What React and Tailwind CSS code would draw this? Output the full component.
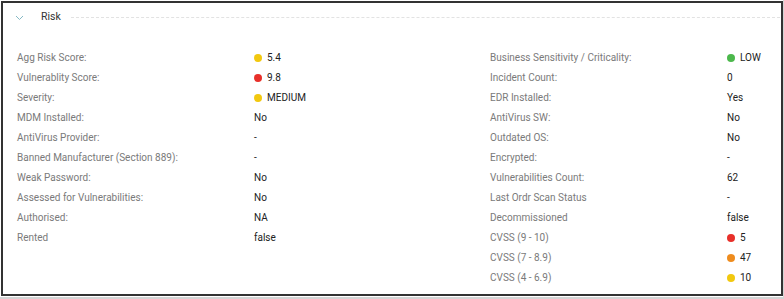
import React from "react";

const dotColors = {
  yellow: "bg-[#f2c80f]",
  red: "bg-[#e8302a]",
  green: "bg-[#4cb84c]",
  orange: "bg-[#ee8c1e]",
};

const left = [
  ["Agg Risk Score:", "5.4", "yellow"],
  ["Vulnerablity Score:", "9.8", "red"],
  ["Severity:", "MEDIUM", "yellow"],
  ["MDM Installed:", "No"],
  ["AntiVirus Provider:", "-"],
  ["Banned Manufacturer (Section 889):", "-"],
  ["Weak Password:", "No"],
  ["Assessed for Vulnerabilities:", "No"],
  ["Authorised:", "NA"],
  ["Rented", "false"],
];

const right = [
  ["Business Sensitivity / Criticality:", "LOW", "green"],
  ["Incident Count:", "0"],
  ["EDR Installed:", "Yes"],
  ["AntiVirus SW:", "No"],
  ["Outdated OS:", "No"],
  ["Encrypted:", "-"],
  ["Vulnerabilities Count:", "62"],
  ["Last Ordr Scan Status", "-"],
  ["Decommissioned", "false"],
  ["CVSS (9 - 10)", "5", "red"],
  ["CVSS (7 - 8.9)", "47", "orange"],
  ["CVSS (4 - 6.9)", "10", "yellow"],
];

function Row({ label, value, dot }) {
  return (
    <div className="flex items-center h-[20px]">
      <div className="w-[237px] text-[#7a7a7a] whitespace-nowrap">{label}</div>
      <div className="flex items-center gap-[5px] text-[#222]">
        {dot && <span className={`inline-block w-[8px] h-[8px] rounded-full ${dotColors[dot]}`} />}
        <span>{value}</span>
      </div>
    </div>
  );
}

export default function App() {
  return (
    <div className="w-[784px] h-[299px] bg-[#d4d4d4] relative overflow-hidden" style={{ fontFamily: "Roboto, 'Liberation Sans', sans-serif" }}>
      <div className="w-[783px] h-[297px] bg-white pt-px pl-px">
        <div className="w-[782px] h-[295px] border-2 border-[#333333] bg-white text-[10px] leading-none">
          <div className="flex items-center h-[28px] pl-[12px] pt-[1px]">
            <svg width="9" height="6" viewBox="0 0 9 6" className="mr-[17px]">
              <path d="M1 1 L4.5 4.5 L8 1" fill="none" stroke="#86b9c4" strokeWidth="1" />
            </svg>
            <span className="text-[#333] text-[10.5px]">Risk</span>
            <div className="flex-1 ml-[10px] mr-[1px] border-t border-dashed border-[#e2e2e2]" />
          </div>
          <div className="flex pl-[14px] pt-[17px]">
            <div className="w-[473px]">
              {left.map(([l, v, d]) => (
                <Row key={l} label={l} value={v} dot={d} />
              ))}
            </div>
            <div className="flex-1">
              {right.map(([l, v, d]) => (
                <Row key={l} label={l} value={v} dot={d} />
              ))}
            </div>
          </div>
        </div>
      </div>
    </div>
  );
}
